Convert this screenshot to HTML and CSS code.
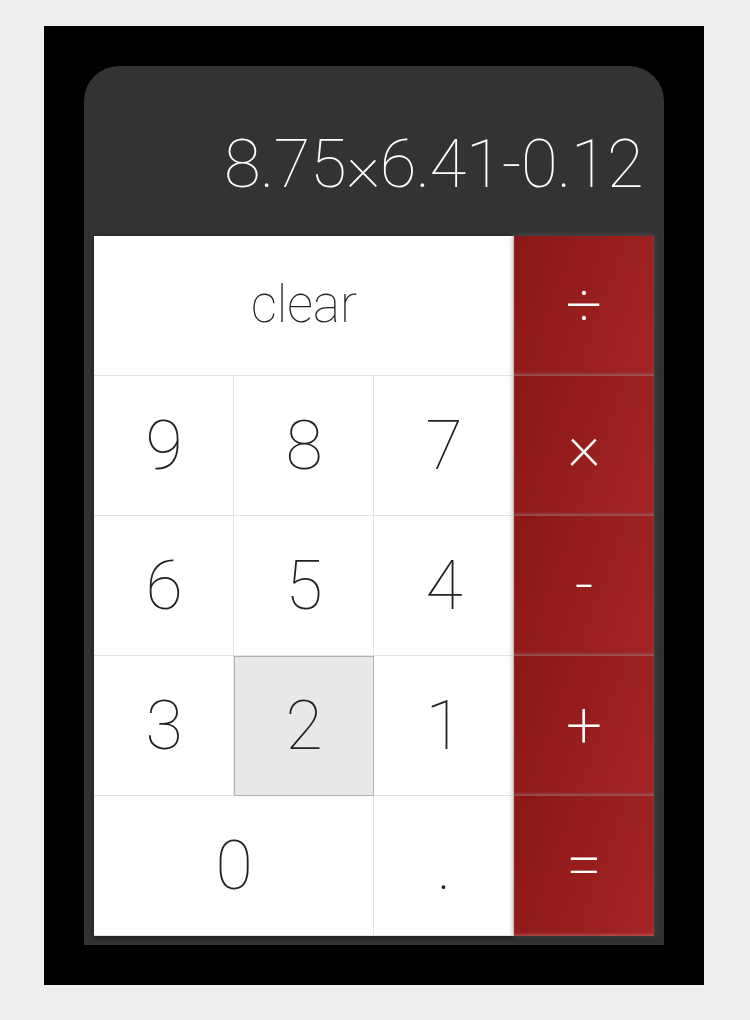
FILE: index.html
```html
<!DOCTYPE html>
<html>
<head>
<meta charset="utf-8">
<link rel="stylesheet" href="styles.css">
</head>
<body>
<div class="frame">
  <div class="calc">
    <div class="display">8.75×6.41-0.12</div>
    <div class="keys">
      <div class="key wide3 clear">clear</div>
      <div class="key op">÷</div>
      <div class="key">9</div>
      <div class="key">8</div>
      <div class="key">7</div>
      <div class="key op">×</div>
      <div class="key">6</div>
      <div class="key">5</div>
      <div class="key">4</div>
      <div class="key op">-</div>
      <div class="key">3</div>
      <div class="key pressed">2</div>
      <div class="key">1</div>
      <div class="key op">+</div>
      <div class="key wide2">0</div>
      <div class="key">.</div>
      <div class="key op">=</div>
    </div>
  </div>
</div>
</body>
</html>
```

FILE: styles.css
```css
html, body {
  margin: 0;
  padding: 0;
  background: #eeeeee;
}
.frame {
  margin: 26px 0 0 44px;
  width: 660px;
  height: 959px;
  background: #000;
  padding: 40px;
  box-sizing: border-box;
}
.calc {
  width: 580px;
  background: #333333;
  border-radius: 35px 35px 0 0;
  padding: 0 10px 9px;
  box-sizing: border-box;
}
.display {
  height: 170px;
  box-sizing: border-box;
  display: flex;
  align-items: flex-end;
  justify-content: flex-end;
  padding: 0 11px 38px 0;
  color: #fff;
  font-family: Roboto, "Liberation Sans", sans-serif;
  font-weight: 100;
  font-size: 67px;
  line-height: 1;
  letter-spacing: -0.6px;
}
.keys {
  display: grid;
  grid-template-columns: repeat(4, 140px);
  grid-auto-rows: 140px;
  box-shadow: 0 2px 6px rgba(0,0,0,0.5);
}
.key {
  background: #fff;
  box-shadow: inset -1px -1px 0 #e2e2e2;
  display: flex;
  align-items: center;
  justify-content: center;
  font-family: Roboto, "Liberation Sans", sans-serif;
  font-weight: 100;
  font-size: 68px;
  color: #222;
  line-height: 1;
}
.wide3 { grid-column: span 3; }
.wide2 { grid-column: span 2; }
.clear { font-size: 51px; padding-bottom: 4px; box-sizing: border-box; }
.pressed {
  background: #e8e8e8;
  box-shadow: inset 0 0 0 1px #b4b4b4;
}
.op {
  background: linear-gradient(110deg, #8a1717 0%, #a42424 100%);
  color: #fff;
  font-weight: 200;
  font-size: 64px;
  box-shadow: inset 0 -2px 2px rgba(255,255,255,0.18), 0 0 6px rgba(110,110,110,0.7);
  position: relative;
  z-index: 1;
}
```
